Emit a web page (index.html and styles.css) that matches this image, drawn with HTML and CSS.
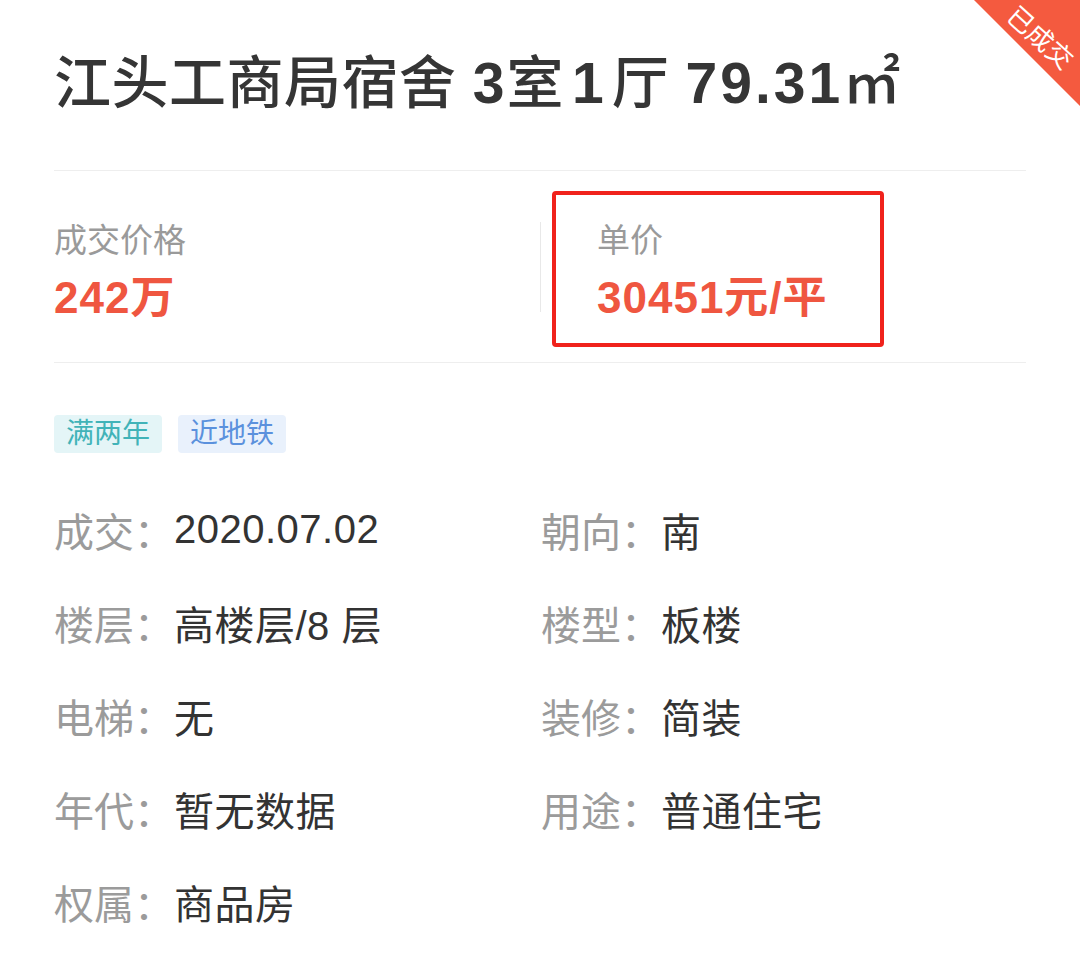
FILE: index.html
```html
<!DOCTYPE html>
<html lang="zh-CN">
<head>
<meta charset="utf-8">
<title>江头工商局宿舍</title>
<link rel="stylesheet" href="styles.css">
</head>
<body>
<div class="page">
  <div class="corner">
    <div class="corner-bg"></div>
    <span class="corner-text">已成交</span>
  </div>

  <h1 class="title">江头工商局宿舍 <span class="num">3</span>室<span class="num num-pad">1</span>厅 <span class="num num-wide">79.31</span>㎡</h1>

  <div class="price-row">
    <div class="price-cell price-cell-left">
      <div class="price-label">成交价格</div>
      <div class="price-value">242万</div>
    </div>
    <div class="vsep"></div>
    <div class="price-cell price-cell-right">
      <div class="price-label">单价</div>
      <div class="price-value">30451元/平</div>
    </div>
    <div class="mark-box"></div>
  </div>

  <div class="tags">
    <span class="tag tag-teal">满两年</span>
    <span class="tag tag-blue">近地铁</span>
  </div>

  <div class="details">
    <div class="item"><span class="k">成交：</span><span class="v">2020.07.02</span></div>
    <div class="item"><span class="k">朝向：</span><span class="v">南</span></div>
    <div class="item"><span class="k">楼层：</span><span class="v">高楼层/8 层</span></div>
    <div class="item"><span class="k">楼型：</span><span class="v">板楼</span></div>
    <div class="item"><span class="k">电梯：</span><span class="v">无</span></div>
    <div class="item"><span class="k">装修：</span><span class="v">简装</span></div>
    <div class="item"><span class="k">年代：</span><span class="v">暂无数据</span></div>
    <div class="item"><span class="k">用途：</span><span class="v">普通住宅</span></div>
    <div class="item"><span class="k">权属：</span><span class="v">商品房</span></div>
  </div>
</div>
</body>
</html>
```

FILE: styles.css
```css
* { box-sizing: border-box; }

html, body {
  margin: 0;
  padding: 0;
  background: #ffffff;
}

body {
  font-family: "Liberation Sans", "Noto Sans CJK SC", sans-serif;
  color: #333333;
}

.page {
  position: relative;
  width: 1080px;
  height: 953px;
  overflow: hidden;
  padding: 0 54px;
}

.corner {
  position: absolute;
  top: 0;
  right: 0;
  width: 106px;
  height: 106px;
}

.corner-bg {
  width: 100%;
  height: 100%;
  background: #f45a3f;
  clip-path: polygon(0 0, 100% 0, 100% 100%);
}

.corner-text {
  position: absolute;
  left: 66px;
  top: 38px;
  transform: translate(-50%, -50%) rotate(42deg);
  color: #ffffff;
  font-size: 26px;
  line-height: 1;
  white-space: nowrap;
}

.title {
  margin: 0;
  padding-top: 50px;
  height: 170px;
  font-size: 57px;
  line-height: 67px;
  font-weight: 500;
  letter-spacing: 0.5px;
  color: #353535;
  white-space: nowrap;
}

.num {
  font-weight: 700;
  letter-spacing: 2px;
}

.num-pad {
  padding: 0 6px 0 8px;
}

.num-wide {
  letter-spacing: 3px;
}

.price-row {
  position: relative;
  display: flex;
  border-top: 1px solid #eeeeee;
  border-bottom: 1px solid #eeeeee;
  height: 193px;
}

.price-cell {
  padding-top: 50px;
}

.price-cell-left {
  flex: 0 0 486px;
}

.price-cell-right {
  flex: 1;
  padding-left: 56px;
}

.vsep {
  align-self: center;
  width: 1px;
  height: 90px;
  background: #e8e8e8;
}

.price-label {
  font-size: 33px;
  line-height: 40px;
  color: #9a9a9a;
}

.price-value {
  margin-top: 12px;
  font-size: 44px;
  line-height: 50px;
  font-weight: 700;
  letter-spacing: 1px;
  color: #ef5640;
}

.mark-box {
  position: absolute;
  left: 498px;
  top: 20px;
  width: 332px;
  height: 156px;
  border: 4px solid #f0221c;
  border-radius: 4px;
}

.tags {
  display: flex;
  gap: 16px;
  margin-top: 52px;
}

.tag {
  display: inline-block;
  height: 38px;
  padding: 0 12px;
  font-size: 28px;
  line-height: 38px;
  border-radius: 4px;
}

.tag-teal {
  background: #e4f5f7;
  color: #41b3b8;
}

.tag-blue {
  background: #e9f1fc;
  color: #5b91dd;
}

.details {
  display: grid;
  grid-template-columns: 487px 1fr;
  margin-top: 30px;
}

.item {
  display: flex;
  height: 93px;
  align-items: center;
  font-size: 40px;
  white-space: nowrap;
}

.k {
  flex: 0 0 116px;
  color: #9b9b9b;
}

.v {
  color: #333333;
  letter-spacing: 0.5px;
}
```
